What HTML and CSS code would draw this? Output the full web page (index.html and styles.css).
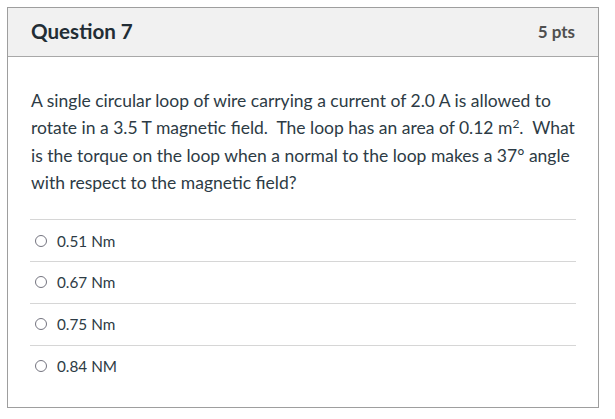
FILE: index.html
```html
<!DOCTYPE html>
<html>
<head>
<meta charset="utf-8">
<link rel="stylesheet" href="styles.css">
</head>
<body>
<div class="question">
  <div class="header">
    <span class="name">Question 7</span>
    <span class="pts">5 pts</span>
  </div>
  <div class="content">
    <p class="text">A single circular loop of wire carrying a current of 2.0 A is allowed to rotate in a 3.5 T magnetic field.&nbsp; The loop has an area of 0.12 m<sup>2</sup>.&nbsp; What is the torque on the loop when a normal to the loop makes a 37° angle with respect to the magnetic field?</p>
    <div class="answers">
      <label class="answer"><span class="radio"></span><span>0.51 Nm</span></label>
      <label class="answer"><span class="radio"></span><span>0.67 Nm</span></label>
      <label class="answer"><span class="radio"></span><span>0.75 Nm</span></label>
      <label class="answer"><span class="radio"></span><span>0.84 NM</span></label>
    </div>
  </div>
</div>
</body>
</html>
```
FILE: styles.css
```css
html, body {
  margin: 0;
  padding: 0;
  background: #fff;
}
body {
  padding: 7px 0 0 7px;
  font-family: Lato, "Liberation Sans", sans-serif;
  color: #2d3b45;
}
.question {
  width: 590px;
  height: 399px;
  border: 1px solid #9e9e9e;
  display: flex;
  flex-direction: column;
}
.header {
  height: 45px;
  padding: 0 23px 3px 23px;
  background: #f1f1f1;
  border-bottom: 1px solid #a8a8a8;
  display: flex;
  align-items: center;
  justify-content: space-between;
}
.name {
  font-size: 20.6px;
  font-weight: 700;
  color: #222d35;
}
.pts {
  font-size: 17px;
  font-weight: 700;
  color: #4f4f4f;
  margin-top: 2px;
}
.content {
  padding: 30px 22px 0 22px;
}
.text {
  margin: 0 0 22px 1px;
  font-size: 17.5px;
  line-height: 27.4px;
}
.text sup {
  font-size: 12px;
  line-height: 0;
  vertical-align: 6px;
}
.answers {
  display: flex;
  flex-direction: column;
}
.answer {
  height: 41px;
  border-top: 1px solid #d6d6d6;
  display: flex;
  align-items: center;
  padding: 0 0 0 5px;
  font-size: 15.3px;
  gap: 10px;
}
.answer:first-child {
  padding-top: 2px;
  height: 39px;
}
.radio {
  width: 10px;
  height: 10px;
  border: 1.7px solid #74747f;
  border-radius: 50%;
  flex: none;
}
```
